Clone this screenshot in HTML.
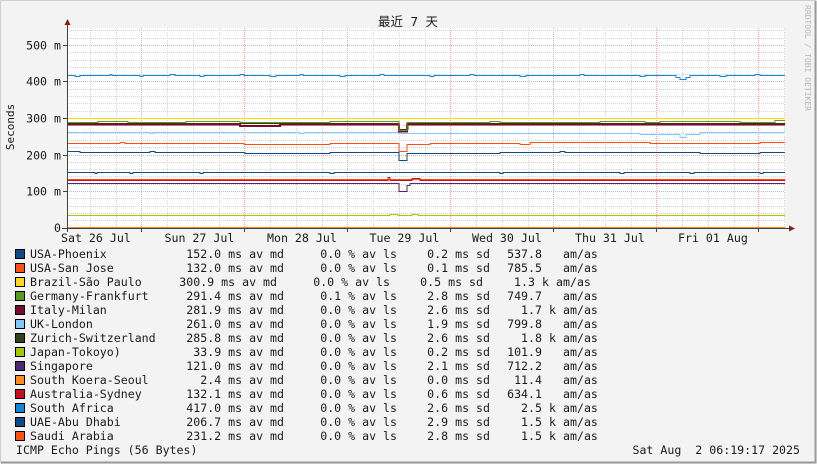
<!DOCTYPE html>
<html><head><meta charset="utf-8">
<style>
html,body{margin:0;padding:0;background:#f3f3f3;}
svg{display:block;}
text{font-family:"DejaVu Sans Mono","Liberation Mono",monospace;font-size:11.6px;fill:#1a1a1a;white-space:pre;}
.d path{shape-rendering:crispEdges;}
</style></head>
<body>
<svg width="817" height="464" viewBox="0 0 817 464" xmlns="http://www.w3.org/2000/svg">
<rect x="0" y="0" width="817" height="464" fill="#f3f3f3"/>
<path d="M0.5 463 V0.5 H816" stroke="#cfcfcf" stroke-width="1" fill="none"/>
<path d="M1 462.5 H815.5 V1" stroke="#9a9a9a" stroke-width="2" fill="none"/>
<rect x="67" y="28" width="718" height="200" fill="#ffffff"/>
<g stroke="#d6d6d6" stroke-width="1" stroke-dasharray="1,1">
<path d="M67 220.5H785M67 213.5H785M67 206.5H785M67 198.5H785M67 184.5H785M67 176.5H785M67 169.5H785M67 162.5H785M67 147.5H785M67 140.5H785M67 133.5H785M67 125.5H785M67 111.5H785M67 103.5H785M67 96.5H785M67 89.5H785M67 74.5H785M67 67.5H785M67 60.5H785M67 52.5H785M67 38.5H785M67 30.5H785"/>
<path d="M90.5 28V228M116.5 28V228M167.5 28V228M193.5 28V228M219.5 28V228M270.5 28V228M296.5 28V228M322.5 28V228M373.5 28V228M399.5 28V228M425.5 28V228M476.5 28V228M502.5 28V228M528.5 28V228M579.5 28V228M605.5 28V228M631.5 28V228M682.5 28V228M708.5 28V228M734.5 28V228M784.5 28V228"/>
</g>
<g stroke="#f2a6a6" stroke-width="1" stroke-dasharray="1,1">
<path d="M67 191.5H785M67 155.5H785M67 118.5H785M67 81.5H785M67 45.5H785"/>
<path d="M141.5 28V228M244.5 28V228M347.5 28V228M450.5 28V228M553.5 28V228M656.5 28V228M758.5 28V228"/>
</g>
<g class="d" fill="none" stroke-width="1.3">
<path stroke="#ff8c1a" d="M67 227.5H785"/>
<path stroke="#a8c800" d="M67 215.5H390V214.5H398V215.5H412V214.5H418V215.5H785"/>
<path stroke="#502a70" d="M67 183.5H399V191.5H407V185.5H410V183.5H785"/>
<path stroke="#ff5010" d="M67 179.5H785"/>
<path stroke="#c8101a" d="M67 180.5H388V177.5H390V180.5H412V178.5H420V180.5H785"/>
<path stroke="#0c4b86" d="M67 172.5H95V173.5H97V172.5H130V173.5H133V172.5H200V173.5H203V172.5H330V173.5H334V172.5H500V173.5H503V172.5H620V173.5H624V172.5H690V173.5H694V172.5H760V173.5H763V172.5H785"/>
<path stroke="#0c4b86" d="M67 151.5H80V152.5H150V151.5H155V152.5H245V153.5H330V152.5H399V160.5H407V153.5H500V152.5H560V151.5H565V152.5H700V153.5H760V152.5H785"/>
<path stroke="#ff5010" d="M67 143.5H120V142.5H125V143.5H244V144.5H330V143.5H399V151.5H407V144.5H430V143.5H520V144.5H530V142.5H650V143.5H760V142.5H785"/>
<path stroke="#80c8ff" d="M67 132.5H150V133.5H153V132.5H300V133.5H304V132.5H399V133.5H640V134.5H680V137.5H686V134.5H700V132.5H785"/>
<path stroke="#30401a" d="M67 123.5H399V129.5H408V123.5H785"/>
<path stroke="#7a0a2a" stroke-width="1.6" d="M67 124.5H240V126H280V124.5H399V131.5H407V124.5H785"/>
<path stroke="#5a9a20" d="M67 122.5H98V121.5H128V122.5H186V121.5H240V122.5H330V121.5H399V130.5H407V122.5H490V121.5H500V122.5H600V121.5H645V122.5H660V121.5H740V122.5H775V120.5H785"/>
<path stroke="#ffd800" d="M67 118.5H785"/>
<path stroke="#1088d8" d="M67 75.5H75V76.5H80V75.5H110V74.5H112V75.5H140V76.5H143V75.5H170V74.5H175V75.5H200V76.5H204V75.5H240V74.5H244V75.5H270V76.5H276V75.5H300V74.5H303V75.5H340V76.5H345V75.5H380V74.5H384V75.5H430V76.5H434V75.5H470V74.5H474V75.5H520V76.5H526V75.5H580V74.5H584V75.5H640V76.5H645V75.5H676V77.5H680V79.5H686V77.5H690V75.5H720V76.5H726V75.5H755V74.5H760V75.5H785"/>
</g>
<g stroke="#404040" stroke-width="1" fill="none">
<path d="M67.5 24V232"/>
<path d="M62 228.5H790"/>
<path d="M63 45.5H67M63 81.5H67M63 118.5H67M63 155.5H67M63 191.5H67"/>
<path d="M67.5 228V232M141.5 228V232M244.5 228V232M347.5 228V232M450.5 228V232M553.5 228V232M656.5 228V232M758.5 228V232"/>
</g>
<path d="M64.5 25L67.5 19L70.5 25Z" fill="#8a1a1a"/>
<path d="M789 225.5L795 228.5L789 231.5Z" fill="#8a1a1a"/>
<g text-anchor="end">
<text x="61" y="49.5">500 m</text>
<text x="61" y="85.5">400 m</text>
<text x="61" y="122.5">300 m</text>
<text x="61" y="159.5">200 m</text>
<text x="61" y="195.5">100 m</text>
<text x="61" y="232">0</text>
</g>
<text x="61" y="242">Sat 26 Jul</text>
<text x="164.5" y="242">Sun 27 Jul</text>
<text x="267" y="242">Mon 28 Jul</text>
<text x="369.5" y="242">Tue 29 Jul</text>
<text x="472" y="242">Wed 30 Jul</text>
<text x="575" y="242">Thu 31 Jul</text>
<text x="678" y="242">Fri 01 Aug</text>
<text x="408" y="26" text-anchor="middle" style="font-family:'DejaVu Sans Mono','Noto Sans CJK SC',monospace;font-size:12.5px;">最近 7 天</text>
<text transform="translate(14,127) rotate(-90)" text-anchor="middle" style="font-size:11px">Seconds</text>
<text transform="translate(805,5) rotate(90)" style="font-size:8px;fill:#b8b8b8;">RRDTOOL / TOBI OETIKER</text>
<g stroke="#000" stroke-width="1">
<rect x="15.5" y="249.5" width="9" height="9" fill="#0c4b86"/>
<rect x="15.5" y="263.5" width="9" height="9" fill="#ff5010"/>
<rect x="15.5" y="277.5" width="9" height="9" fill="#ffd820"/>
<rect x="15.5" y="291.5" width="9" height="9" fill="#5a9a20"/>
<rect x="15.5" y="305.5" width="9" height="9" fill="#7a0a2a"/>
<rect x="15.5" y="319.5" width="9" height="9" fill="#80c8ff"/>
<rect x="15.5" y="333.5" width="9" height="9" fill="#30401a"/>
<rect x="15.5" y="347.5" width="9" height="9" fill="#a8c800"/>
<rect x="15.5" y="361.5" width="9" height="9" fill="#502a70"/>
<rect x="15.5" y="375.5" width="9" height="9" fill="#ff8c1a"/>
<rect x="15.5" y="389.5" width="9" height="9" fill="#c8101a"/>
<rect x="15.5" y="403.5" width="9" height="9" fill="#1088d8"/>
<rect x="15.5" y="417.5" width="9" height="9" fill="#0c4b86"/>
<rect x="15.5" y="431.5" width="9" height="9" fill="#ff5010"/>
</g>
<g>
<text x="30" y="258">USA-Phoenix</text>
<text x="30" y="272">USA-San Jose</text>
<text x="30" y="286">Brazil-São Paulo</text>
<text x="30" y="300">Germany-Frankfurt</text>
<text x="30" y="314">Italy-Milan</text>
<text x="30" y="328">UK-London</text>
<text x="30" y="342">Zurich-Switzerland</text>
<text x="30" y="356">Japan-Tokoyo)</text>
<text x="30" y="370">Singapore</text>
<text x="30" y="384">South Koera-Seoul</text>
<text x="30" y="398">Australia-Sydney</text>
<text x="30" y="412">South Africa</text>
<text x="30" y="426">UAE-Abu Dhabi</text>
<text x="30" y="440">Saudi Arabia</text>
</g>
<g text-anchor="end">
<text x="284" y="258">152.0 ms av md</text>
<text x="284" y="272">132.0 ms av md</text>
<text x="277" y="286">300.9 ms av md</text>
<text x="284" y="300">291.4 ms av md</text>
<text x="284" y="314">281.9 ms av md</text>
<text x="284" y="328">261.0 ms av md</text>
<text x="284" y="342">285.8 ms av md</text>
<text x="284" y="356">33.9 ms av md</text>
<text x="284" y="370">121.0 ms av md</text>
<text x="284" y="384">2.4 ms av md</text>
<text x="284" y="398">132.1 ms av md</text>
<text x="284" y="412">417.0 ms av md</text>
<text x="284" y="426">206.7 ms av md</text>
<text x="284" y="440">231.2 ms av md</text>
<text x="397" y="258">0.0 % av ls</text>
<text x="397" y="272">0.0 % av ls</text>
<text x="390" y="286">0.0 % av ls</text>
<text x="397" y="300">0.1 % av ls</text>
<text x="397" y="314">0.0 % av ls</text>
<text x="397" y="328">0.0 % av ls</text>
<text x="397" y="342">0.0 % av ls</text>
<text x="397" y="356">0.0 % av ls</text>
<text x="397" y="370">0.0 % av ls</text>
<text x="397" y="384">0.0 % av ls</text>
<text x="397" y="398">0.0 % av ls</text>
<text x="397" y="412">0.0 % av ls</text>
<text x="397" y="426">0.0 % av ls</text>
<text x="397" y="440">0.0 % av ls</text>
<text x="490" y="258">0.2 ms sd</text>
<text x="490" y="272">0.1 ms sd</text>
<text x="483" y="286">0.5 ms sd</text>
<text x="490" y="300">2.8 ms sd</text>
<text x="490" y="314">2.6 ms sd</text>
<text x="490" y="328">1.9 ms sd</text>
<text x="490" y="342">2.6 ms sd</text>
<text x="490" y="356">0.2 ms sd</text>
<text x="490" y="370">2.1 ms sd</text>
<text x="490" y="384">0.0 ms sd</text>
<text x="490" y="398">0.6 ms sd</text>
<text x="490" y="412">2.6 ms sd</text>
<text x="490" y="426">2.9 ms sd</text>
<text x="490" y="440">2.8 ms sd</text>
<text x="542" y="258">537.8</text>
<text x="542" y="272">785.5</text>
<text x="535" y="286">1.3</text>
<text x="542" y="300">749.7</text>
<text x="542" y="314">1.7</text>
<text x="542" y="328">799.8</text>
<text x="542" y="342">1.8</text>
<text x="542" y="356">101.9</text>
<text x="542" y="370">712.2</text>
<text x="542" y="384">11.4</text>
<text x="542" y="398">634.1</text>
<text x="542" y="412">2.5</text>
<text x="542" y="426">1.5</text>
<text x="542" y="440">1.5</text>
</g>
<g>
<text x="542" y="286">k</text>
<text x="549" y="314">k</text>
<text x="549" y="342">k</text>
<text x="549" y="412">k</text>
<text x="549" y="426">k</text>
<text x="549" y="440">k</text>
<text x="563" y="258">am/as</text>
<text x="563" y="272">am/as</text>
<text x="556" y="286">am/as</text>
<text x="563" y="300">am/as</text>
<text x="563" y="314">am/as</text>
<text x="563" y="328">am/as</text>
<text x="563" y="342">am/as</text>
<text x="563" y="356">am/as</text>
<text x="563" y="370">am/as</text>
<text x="563" y="384">am/as</text>
<text x="563" y="398">am/as</text>
<text x="563" y="412">am/as</text>
<text x="563" y="426">am/as</text>
<text x="563" y="440">am/as</text>
</g>
<text x="16" y="454">ICMP Echo Pings (56 Bytes)</text>
<text x="800" y="454" text-anchor="end">Sat Aug &#160;2 06:19:17 2025</text>
</svg>
</body></html>
